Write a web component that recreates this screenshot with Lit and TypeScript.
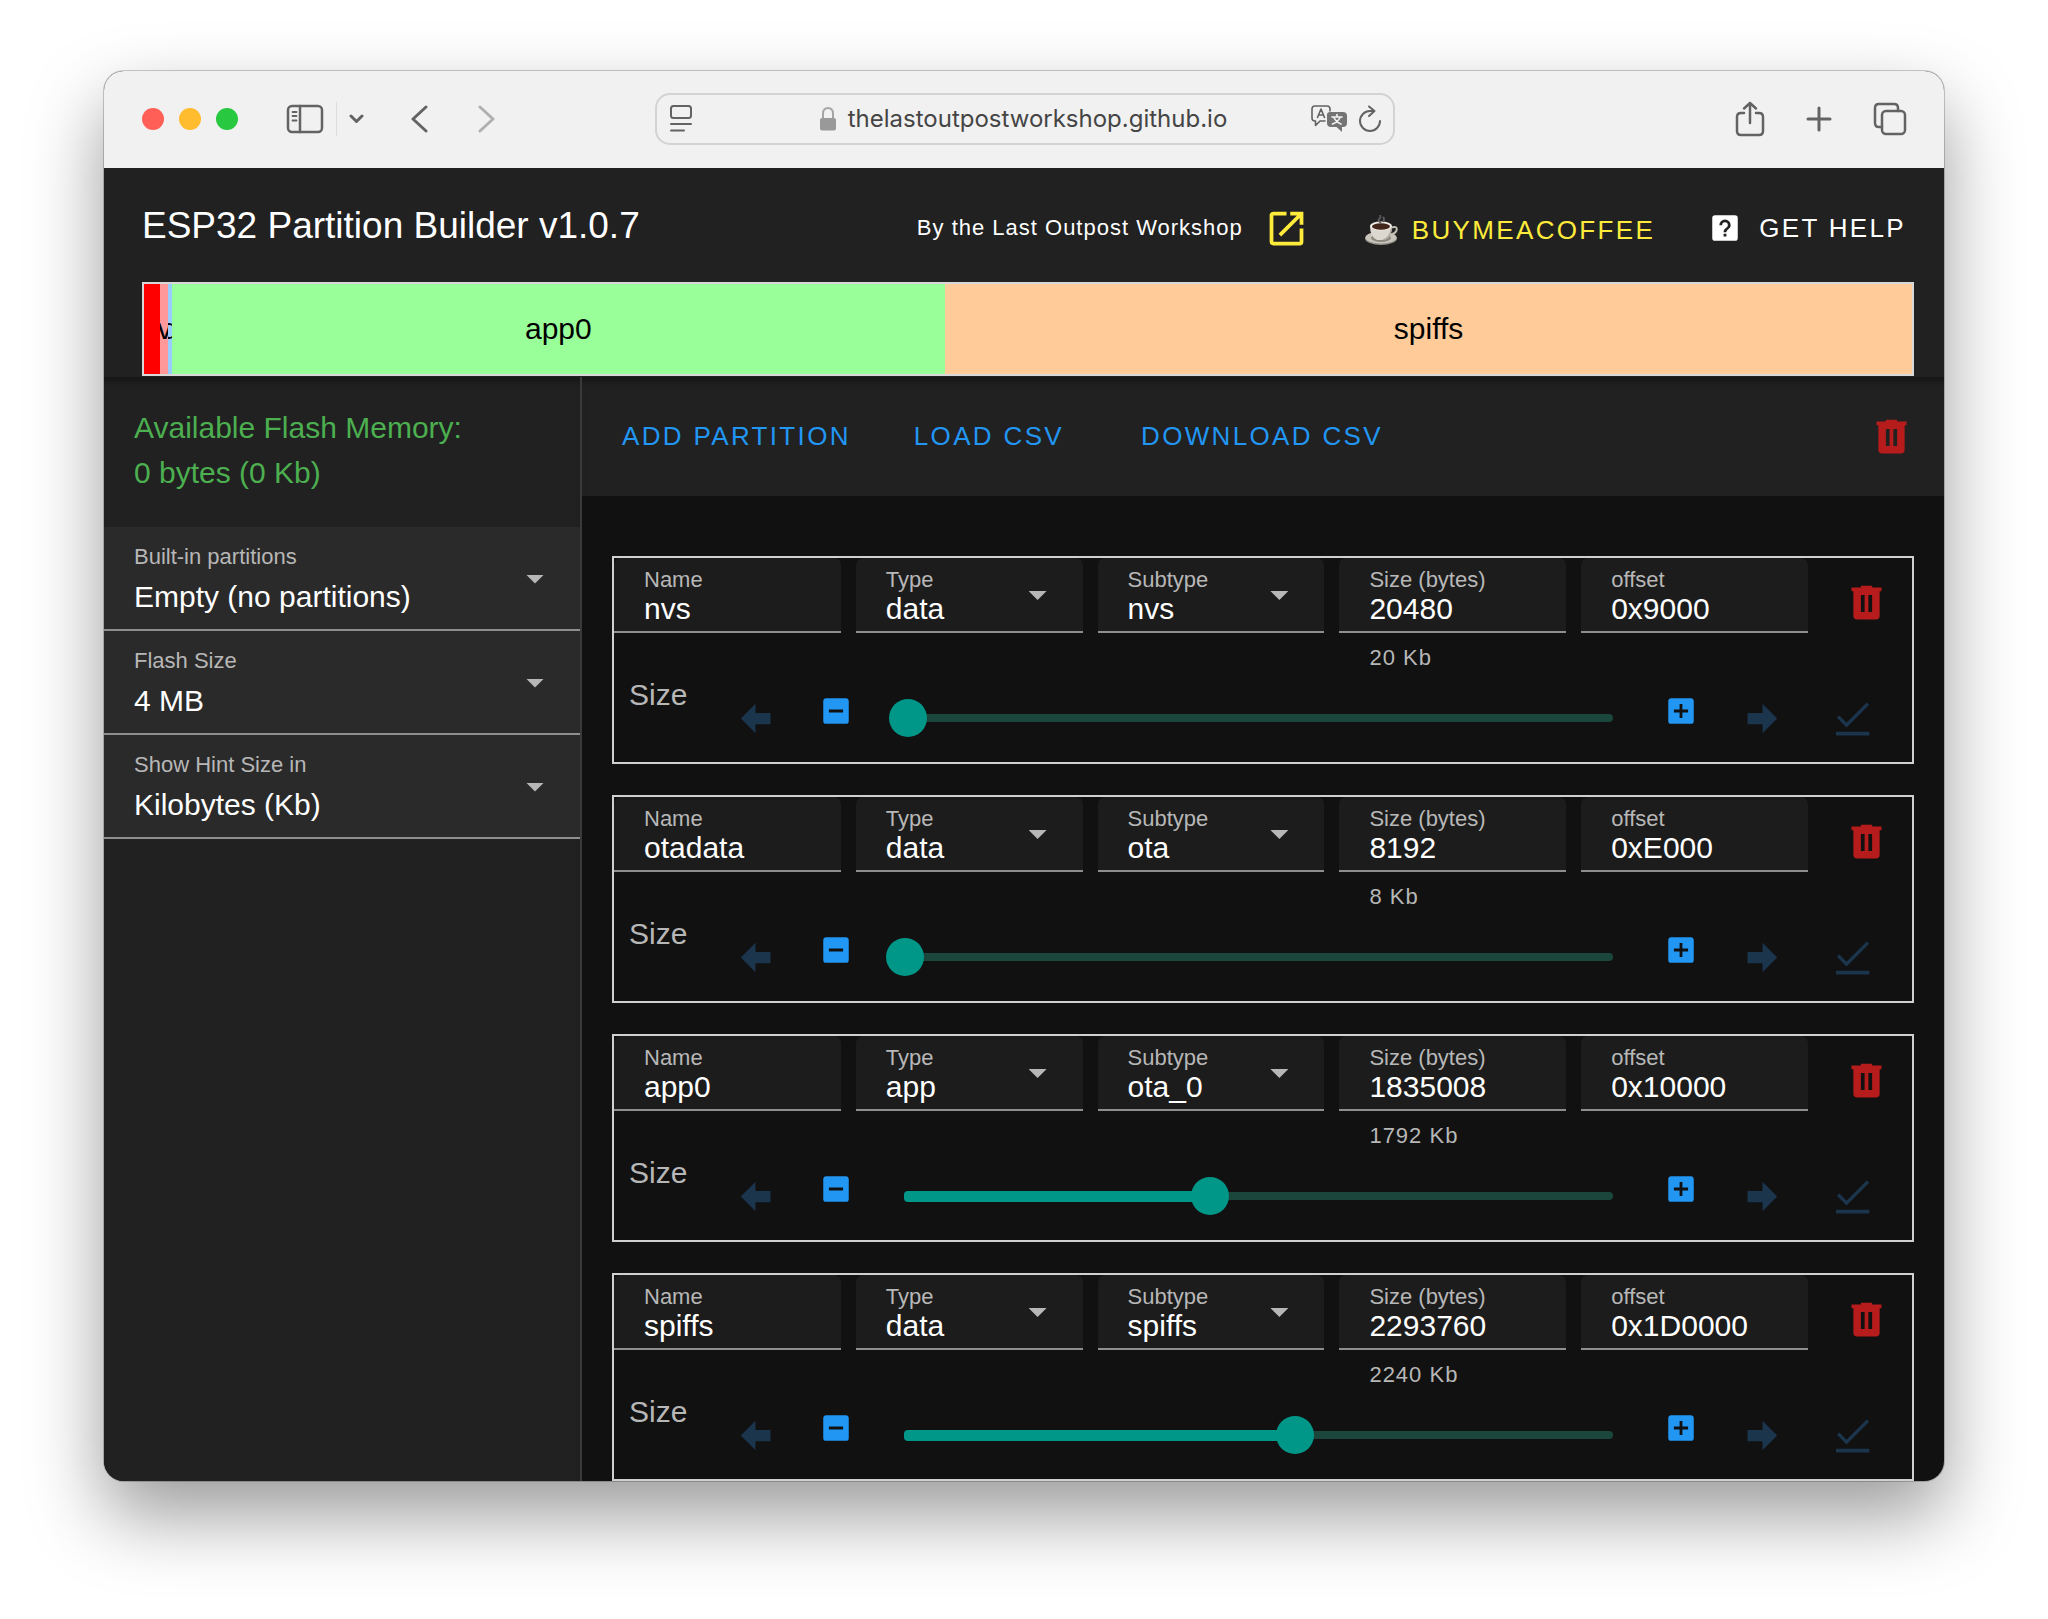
import { LitElement, html, css, svg } from "lit";
import { customElement, property } from "lit/decorators.js";

interface Partition {
  name: string;
  type: string;
  subtype: string;
  size: number;
  offset: string;
  position: number;
}

const FLASH = 4194304;

const PARTITIONS: Partition[] = [
  { name: "nvs", type: "data", subtype: "nvs", size: 20480, offset: "0x9000", position: 0.5 },
  { name: "otadata", type: "data", subtype: "ota", size: 8192, offset: "0xE000", position: 0.1 },
  { name: "app0", type: "app", subtype: "ota_0", size: 1835008, offset: "0x10000", position: 43.2 },
  { name: "spiffs", type: "data", subtype: "spiffs", size: 2293760, offset: "0x1D0000", position: 55.2 },
];

const SEGMENTS = [
  { label: "", size: 0x9000, color: "#ff0000" },
  { label: "nvs", size: 20480, color: "#ff9999" },
  { label: "otadata", size: 8192, color: "#99ccff" },
  { label: "app0", size: 1835008, color: "#99ff99" },
  { label: "spiffs", size: 2293760, color: "#ffcc99" },
];

const PATHS: Record<string, string> = {
  trash: "M9,3V4H4V6H5V19A2,2 0 0,0 7,21H17A2,2 0 0,0 19,19V6H20V4H15V3H9M9,8H11V17H9V8M13,8H15V17H13V8Z",
  left: "M20,9V15H12V19.84L4.16,12L12,4.16V9H20Z",
  right: "M4,15V9H12V4.16L19.84,12L12,19.84V15H4Z",
  minus: "M17,13H7V11H17M19,3H5C3.89,3 3,3.89 3,5V19A2,2 0 0,0 5,21H19A2,2 0 0,0 21,19V5C21,3.89 20.1,3 19,3Z",
  plus: "M17,13H13V17H11V13H7V11H11V7H13V11H17M19,3H5C3.89,3 3,3.89 3,5V19A2,2 0 0,0 5,21H19A2,2 0 0,0 21,19V5C21,3.89 20.1,3 19,3Z",
  check: "M3.7,11.6L5,10.4L8.8,14.2L19.6,3.4L20.9,4.6L8.8,16.8ZM3.2,19H21V21H3.2Z",
  open: "M14,3V5H17.59L7.76,14.83L9.17,16.24L19,6.41V10H21V3M19,19H5V5H12V3H5C3.89,3 3,3.9 3,5V19A2,2 0 0,0 5,21H19A2,2 0 0,0 21,19V12H19V19Z",
  help: "M11,18H13V16H11V18M12,6A4,4 0 0,0 8,10H10A2,2 0 0,1 12,8A2,2 0 0,1 14,10C14,12 11,11.75 11,15H13C13,12.75 16,12.5 16,10A4,4 0 0,0 12,6M5,3H19A2,2 0 0,1 21,5V19A2,2 0 0,1 19,21H5A2,2 0 0,1 3,19V5A2,2 0 0,1 5,3Z",
};

const icon = (name: string, size = "lg") => html`
  <svg class="icon ${size}" viewBox="0 0 24 24" aria-hidden="true">${svg`<path d=${PATHS[name]} />`}</svg>
`;

const shared = css`
  * {
    box-sizing: border-box;
  }
  button,
  input,
  select {
    margin: 0;
    padding: 0;
    border: 0;
    background: none;
    color: inherit;
    font: inherit;
    letter-spacing: inherit;
    appearance: none;
    outline: none;
  }
  button,
  a {
    display: inline-flex;
    align-items: center;
    justify-content: center;
    color: inherit;
    text-decoration: none;
    white-space: nowrap;
  }
  .icon {
    display: block;
    fill: currentColor;
  }
  .lg {
    width: 45px;
    height: 45px;
  }
  .sm {
    width: 34px;
    height: 34px;
  }
`;

@customElement("form-field")
class FormField extends LitElement {
  @property() label = "";
  @property() value = "";
  @property({ type: Boolean }) choice = false;
  @property({ type: Boolean, reflect: true }) compact = false;

  static styles = [
    shared,
    css`
      :host {
        display: grid;
        height: 104px;
        border-bottom: 2px solid #8e8e8e;
        background: #2a2a2a;
      }
      :host([compact]) {
        height: 75px;
        border-radius: 7px 7px 0 0;
        background: #1c1c1c;
      }
      label,
      .control,
      .arrow {
        grid-area: 1 / 1;
      }
      label {
        z-index: 1;
        align-self: start;
        padding: 16px 30px 0;
        color: #b7b7b7;
        font-size: 22px;
        line-height: 28px;
        pointer-events: none;
      }
      .control {
        width: 100%;
        min-width: 0;
        height: 100%;
        padding: 37px 30px 0;
        color: #ffffff;
        font-size: 30px;
        line-height: 36px;
        text-overflow: ellipsis;
      }
      .arrow {
        align-self: center;
        justify-self: end;
        margin: 2px 36px 0 0;
        width: 18px;
        height: 9px;
        background: #b7b7b7;
        clip-path: polygon(0 0, 100% 0, 50% 100%);
        pointer-events: none;
      }
      :host([compact]) label {
        padding-top: 8px;
      }
      :host([compact]) .control {
        padding-top: 29px;
      }
    `,
  ];

  render() {
    return html`
      <label for="control">${this.label}</label>
      ${this.choice
        ? html`<select class="control" id="control"><option>${this.value}</option></select>
            <span class="arrow"></span>`
        : html`<input class="control" id="control" type="text" .value=${this.value} />`}
    `;
  }
}

@customElement("partition-card")
class PartitionCard extends LitElement {
  @property({ attribute: false }) item!: Partition;

  static styles = [
    shared,
    css`
      :host {
        display: block;
        border: 2px solid #cfd0cf;
        height: 208px;
      }
      .fields {
        display: grid;
        grid-template-columns: minmax(0, 1fr) 104px;
      }
      .columns {
        display: grid;
        grid-template-columns: repeat(5, minmax(0, 1fr));
        gap: 15px;
        height: 120px;
      }
      .hint {
        padding: 10px 30px 0;
        color: #b7b7b7;
        font-size: 22px;
        line-height: 30px;
        letter-spacing: 1px;
      }
      .delete {
        height: 88px;
        padding-left: 12px;
        color: #b71c1c;
      }
      .sizing {
        display: grid;
        grid-template-columns: 94px 64px 98px minmax(0, 1fr) 98px 64px 116px;
        align-items: center;
        height: 80px;
        padding: 0 2px 0 15px;
        color: #1b354d;
      }
      .size-label {
        padding-bottom: 46px;
        color: #b7b7b7;
        font-size: 30px;
        line-height: 34px;
      }
      .step {
        padding-bottom: 14px;
        color: #2196f3;
      }
      .slider {
        display: grid;
        align-items: center;
      }
      .rail,
      .travel,
      .range {
        grid-area: 1 / 1;
      }
      .rail,
      .travel {
        margin: 0 19px;
      }
      .rail {
        height: 8px;
        border-radius: 4px;
        background: #1b463c;
      }
      .filled {
        height: 11px;
        border-radius: 4px;
        background: #009688;
      }
      .range {
        width: 100%;
        height: 38px;
      }
      .range::-webkit-slider-thumb {
        appearance: none;
        width: 38px;
        height: 38px;
        border-radius: 50%;
        background: #009688;
      }
    `,
  ];

  render() {
    const p = this.item;
    return html`
      <div class="fields">
        <div class="columns">
          <form-field compact label="Name" .value=${p.name}></form-field>
          <form-field compact choice label="Type" .value=${p.type}></form-field>
          <form-field compact choice label="Subtype" .value=${p.subtype}></form-field>
          <div>
            <form-field compact label="Size (bytes)" .value=${String(p.size)}></form-field>
            <div class="hint">${p.size / 1024} Kb</div>
          </div>
          <form-field compact label="offset" .value=${p.offset}></form-field>
        </div>
        <button class="delete" aria-label="Delete partition">${icon("trash")}</button>
      </div>
      <div class="sizing">
        <label class="size-label" for="range">Size</label>
        <button disabled aria-label="Smallest size">${icon("left")}</button>
        <button class="step" aria-label="Decrease size">${icon("minus", "sm")}</button>
        <div class="slider">
          <div class="rail"></div>
          <div class="travel"><div class="filled" style="width:${p.position}%"></div></div>
          <input class="range" id="range" type="range" min="0" max="100" step="0.1" .value=${String(p.position)} />
        </div>
        <button class="step" aria-label="Increase size">${icon("plus", "sm")}</button>
        <button disabled aria-label="Largest size">${icon("right")}</button>
        <button disabled aria-label="Fit size">${icon("check")}</button>
      </div>
    `;
  }
}

@customElement("browser-bar")
class BrowserBar extends LitElement {
  static styles = [
    shared,
    css`
      :host {
        display: grid;
        grid-template-columns: 1fr minmax(0, 740px) 1fr;
        align-items: center;
        height: 97px;
        padding: 0 37px 2px 38px;
        background: #f1f1f1;
        color: #636363;
      }
      svg {
        display: block;
        fill: none;
        stroke: currentColor;
        stroke-width: 3;
        stroke-linecap: round;
        stroke-linejoin: round;
      }
      .left,
      .right,
      .lights,
      .address,
      .site {
        display: flex;
        align-items: center;
      }
      .lights {
        gap: 15px;
        margin-right: 48px;
      }
      .light {
        width: 22px;
        height: 22px;
        border-radius: 50%;
      }
      .close { background: #ff5f57; }
      .minimise { background: #febc2e; }
      .zoom { background: #28c840; }
      .divider {
        width: 1px;
        height: 34px;
        margin: 0 12px;
        background: #dddddd;
      }
      .back {
        margin: 0 48px 0 46px;
      }
      .forward {
        color: #b0b0b0;
      }
      .address {
        height: 52px;
        padding: 0 11px 0 13px;
        border: 2px solid #d3d3d3;
        border-radius: 15px;
      }
      .site {
        flex: 1;
        justify-content: center;
        gap: 11px;
        padding-left: 44px;
        color: #454545;
        font-family: Inter, "Liberation Sans", sans-serif;
        font-size: 24px;
      }
      .url {
        flex: none;
      }
      .reload {
        margin-left: 10px;
      }
      .right {
        justify-content: flex-end;
        gap: 41px;
      }
    `,
  ];

  render() {
    return html`
      <div class="left">
        <div class="lights">
          <button class="light close" aria-label="Close"></button>
          <button class="light minimise" aria-label="Minimise"></button>
          <button class="light zoom" aria-label="Zoom"></button>
        </div>
        <button aria-label="Sidebar">
          <svg width="38" height="30" viewBox="0 0 38 30">
            <rect x="2" y="2" width="34" height="26" rx="4" stroke-width="2.5" />
            <path d="M14 2V28" stroke-width="2.5" />
            <path d="M6.5 8H10.500M6.500 12H10.500M6.500 16.500H10.500" stroke-width="1.800" />
          </svg>
        </button>
        <span class="divider"></span>
        <button aria-label="Tab groups">
          <svg width="15" height="10" viewBox="0 0 15 10"><path d="M2 2L7.500 7.500L13 2" /></svg>
        </button>
        <button class="back" aria-label="Back">
          <svg width="19" height="28" viewBox="0 0 19 28"><path d="M16 2L3 14L16 26" /></svg>
        </button>
        <button class="forward" aria-label="Forward">
          <svg width="19" height="28" viewBox="0 0 19 28"><path d="M3 2L16 14L3 26" /></svg>
        </button>
      </div>
      <div class="address">
        <button aria-label="Page menu">
          <svg width="22" height="27" viewBox="0 0 22 27">
            <g stroke-width="2"><rect x="1" y="1" width="20" height="12" rx="2.500" /><path d="M1 19H21M1 25.500H14" /></g>
          </svg>
        </button>
        <div class="site">
          <svg width="18" height="26" viewBox="0 0 18 26">
            <path d="M4 12V7.500C4 0 14 0 14 7.500V12" stroke="#a5a5a5" stroke-width="2" />
            <rect x="1" y="12" width="16" height="12.500" rx="2" fill="#999999" stroke="none" />
          </svg>
          <span class="url">thelastoutpostworkshop.github.io</span>
        </div>
        <button aria-label="Translate">
          <svg width="37" height="28" viewBox="0 0 37 28">
            <g stroke-width="1.600">
              <path d="M19 6V4Q19 1 16 1H4Q1 1 1 4V13Q1 16 4 16H4.500V20.500L9 16H14" />
              <path d="M6.500 12.500L10 4L13.500 12.500M7.700 10H12.300" />
            </g>
            <path d="M19 7H32Q36 7 36 11V18Q36 22 32 22H31V27L25.500 22H20Q16 22 16 18V10Q16 7 19 7Z" fill="#747474" stroke="none" />
            <path d="M21 12H31M26 9.500V12M23 12.500Q25 17 30 19M29 12.500Q27 17 21.500 19" stroke="#f1f1f1" stroke-width="1.700" />
          </svg>
        </button>
        <button class="reload" aria-label="Reload">
          <svg width="24" height="28" viewBox="0 0 24 28">
            <g stroke-width="2"><path d="M15 6H12A10 10 0 1 0 22 16" /><path d="M11 1.500L16.500 6L11 11" /></g>
          </svg>
        </button>
      </div>
      <div class="right">
        <button aria-label="Share">
          <svg width="30" height="36" viewBox="0 0 30 36">
            <path d="M9 12H6Q2 12 2 16V30Q2 34 6 34H24Q28 34 28 30V16Q28 12 24 12H21" stroke-width="2.500" />
            <path d="M15 22V2M9 7.500L15 2L21 7.500" stroke-width="2.500" />
          </svg>
        </button>
        <button aria-label="New tab">
          <svg width="26" height="26" viewBox="0 0 26 26"><path d="M13 2V24M2 13H24" /></svg>
        </button>
        <button aria-label="Tab overview">
          <svg width="34" height="34" viewBox="0 0 34 34">
            <g stroke-width="2.500"><rect x="9" y="9" width="23" height="23" rx="4" /><path d="M9 25H6Q2 25 2 21V6Q2 2 6 2H21Q25 2 25 6V9" /></g>
          </svg>
        </button>
      </div>
    `;
  }
}

@customElement("app-root")
class AppRoot extends LitElement {
  static styles = [
    shared,
    css`
      :host {
        display: block;
        box-sizing: border-box;
        min-height: 100vh;
        padding: 71px 104px 138px;
        background: #ffffff;
        font-family: "Liberation Sans", Arial, sans-serif;
      }
      .window {
        overflow: hidden;
        border-radius: 20px;
        background: #111111;
        color: #ffffff;
        box-shadow: 0 0 0 1px rgba(0, 0, 0, 0.2), 0 34px 76px rgba(0, 0, 0, 0.4);
      }
      .header {
        display: block;
        padding: 0 30px 1px 38px;
        background: #212121;
      }
      .titles {
        display: flex;
        align-items: center;
        height: 114px;
        padding-top: 6px;
      }
      .title {
        flex: 1;
        margin: 0 0 4px;
        font-size: 37px;
        font-weight: 400;
        line-height: 48px;
      }
      .byline {
        margin-right: 21px;
        font-size: 22px;
        letter-spacing: 1px;
      }
      .caps {
        font-size: 26px;
        letter-spacing: 0.09em;
      }
      .yellow {
        color: #ffeb3b;
      }
      .coffee {
        gap: 14px;
        margin: 4px 53px 0 56px;
      }
      .help {
        gap: 17px;
        padding-right: 8px;
      }
      .memory {
        display: flex;
        height: 94px;
        border: 2px solid #d8d8d8;
      }
      .segment {
        display: flex;
        align-items: center;
        justify-content: center;
        overflow: hidden;
        color: #000000;
        font-size: 30px;
      }
      .body {
        display: grid;
        grid-template-columns: 478px minmax(0, 1fr);
      }
      .sidebar {
        border-right: 2px solid #3a3a3a;
        background: #212121;
        box-shadow: inset 0 10px 8px -6px rgba(0, 0, 0, 0.4);
      }
      .available {
        margin: 0;
        padding: 28px 30px 32px;
        color: #4caf50;
        font-size: 30px;
        line-height: 45px;
      }
      .actions {
        display: flex;
        align-items: center;
        height: 119px;
        padding: 0 30px 0 40px;
        background: #212121;
        color: #2196f3;
        box-shadow: inset 0 10px 8px -6px rgba(0, 0, 0, 0.4);
      }
      .group {
        display: flex;
        flex: 1;
        gap: 63px;
      }
      .download {
        margin-left: 14px;
      }
      .clear {
        color: #b71c1c;
      }
      .list {
        display: grid;
        gap: 31px;
        padding: 60px 30px 0;
      }
    `,
  ];

  render() {
    return html`
      <div class="window">
        <browser-bar></browser-bar>
        <header class="header">
          <div class="titles">
            <h1 class="title">ESP32 Partition Builder v1.0.7</h1>
            <span class="byline">By the Last Outpost Workshop</span>
            <a class="yellow" href="#workshop" aria-label="Open workshop">${icon("open")}</a>
            <a class="caps yellow coffee" href="#coffee">
              <svg width="33" height="31" viewBox="0 0 33 31" aria-hidden="true">
                <ellipse cx="16" cy="23.500" rx="16" ry="6.500" fill="#97938a" />
                <ellipse cx="16" cy="22.500" rx="15.500" ry="6" fill="#c9c5bc" />
                <ellipse cx="16" cy="23" rx="10" ry="4" fill="#8d887e" />
                <path d="M25 13Q33 10 31.500 15.500Q29.500 20 23 19.500" fill="none" stroke="#c2beb5" stroke-width="2" />
                <path d="M5 11H27Q27 22 20 25H12Q5 22 5 11Z" fill="#dcd8d0" />
                <path d="M17 25Q25 22 26 13L27 11Q27 22 20 25Z" fill="#aaa59b" />
                <ellipse cx="16" cy="11" rx="11" ry="4.500" fill="#eeebe4" />
                <ellipse cx="16" cy="11.500" rx="9" ry="3.300" fill="#43261a" />
                <path d="M16 8Q12 5 15 3Q16 2 15 0M18 7Q20 4 18 2" fill="none" stroke="#5c5c5e" stroke-width="1.800" />
              </svg>
              <span>BUYMEACOFFEE</span>
            </a>
            <a class="caps help" href="#help">${icon("help", "sm")}<span>GET HELP</span></a>
          </div>
          <div class="memory">
            ${SEGMENTS.map(
              (s) => html`<div class="segment" style="width:${(s.size / FLASH) * 100}%;background:${s.color}">${s.label}</div>`
            )}
          </div>
        </header>
        <div class="body">
          <aside class="sidebar">
            <p class="available">Available Flash Memory:<br />0 bytes (0 Kb)</p>
            <form-field choice label="Built-in partitions" value="Empty (no partitions)"></form-field>
            <form-field choice label="Flash Size" value="4 MB"></form-field>
            <form-field choice label="Show Hint Size in" value="Kilobytes (Kb)"></form-field>
          </aside>
          <main>
            <div class="actions">
              <div class="group">
                <button class="caps">ADD PARTITION</button>
                <button class="caps">LOAD CSV</button>
                <button class="caps download">DOWNLOAD CSV</button>
              </div>
              <button class="clear" aria-label="Delete all partitions">${icon("trash")}</button>
            </div>
            <div class="list">
              ${PARTITIONS.map((p) => html`<partition-card .item=${p}></partition-card>`)}
            </div>
          </main>
        </div>
      </div>
    `;
  }
}
